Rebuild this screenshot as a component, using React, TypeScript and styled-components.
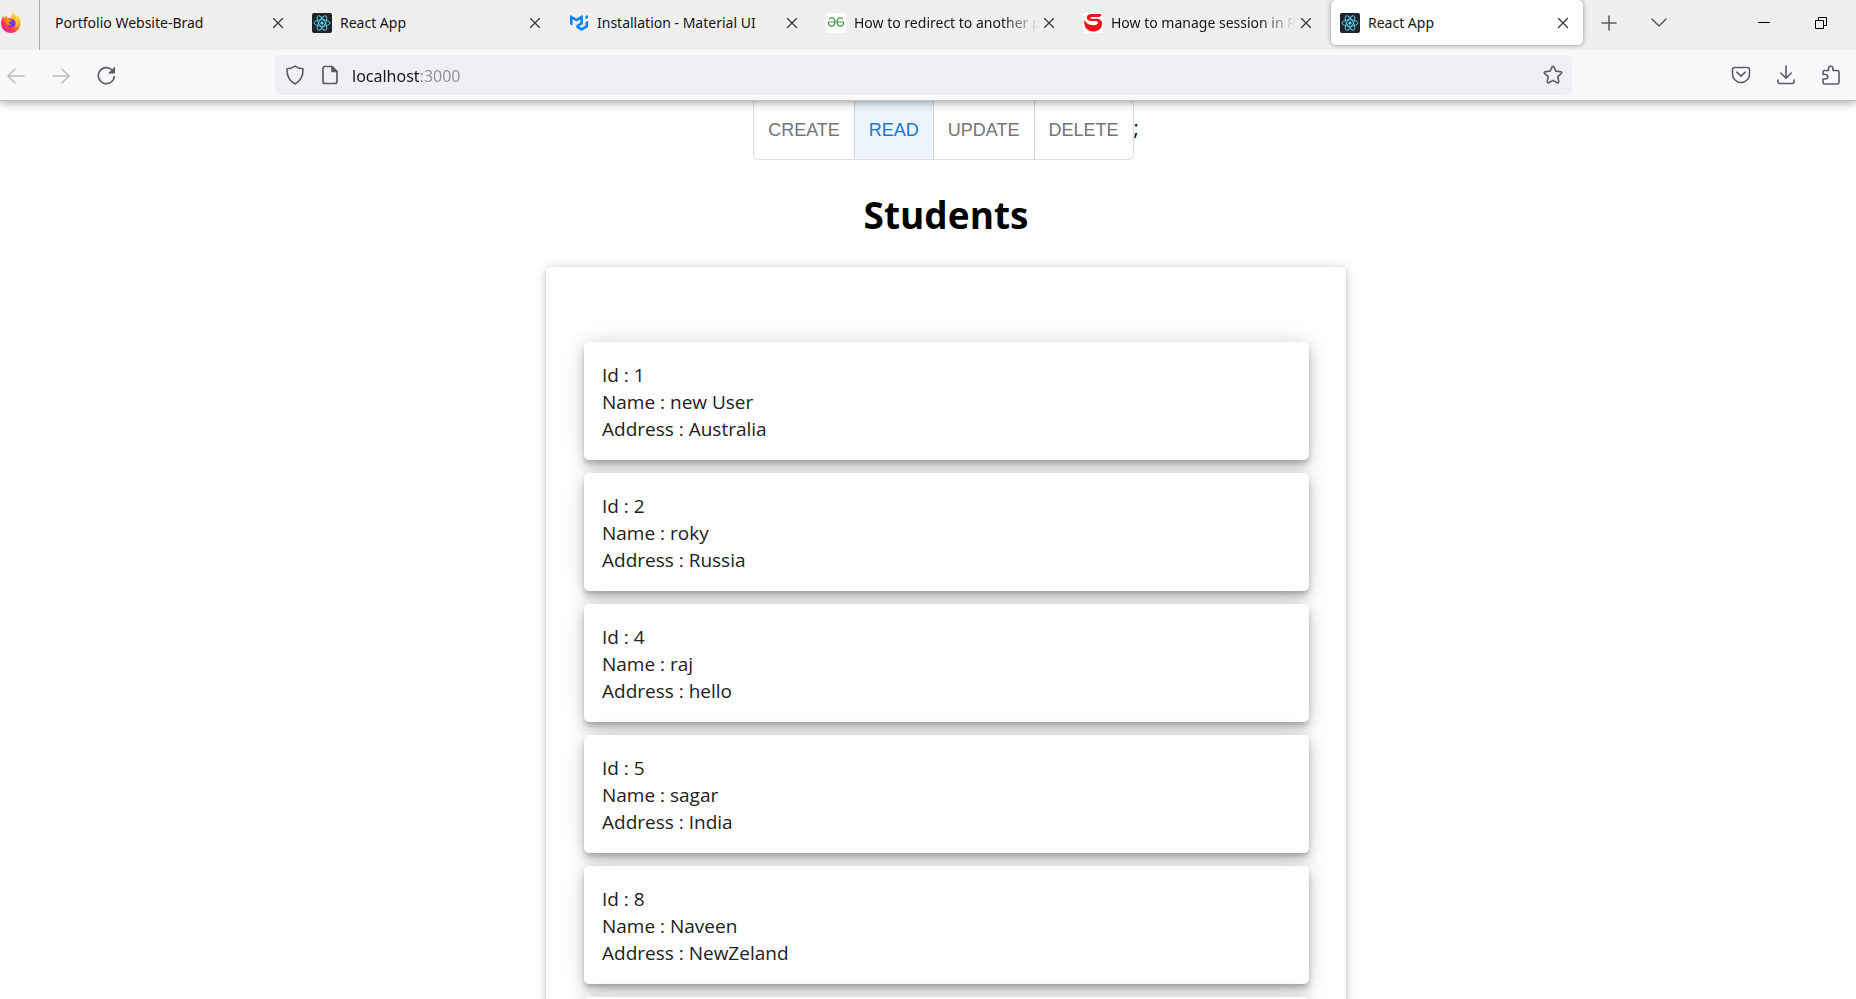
import React from "react";
import styled, { createGlobalStyle, css } from "styled-components";
import { SiMui } from "react-icons/si";

const uiFont = '"Open Sans", "Noto Sans", sans-serif';
const chromeFont = '"Noto Sans", "Open Sans", sans-serif';

const GlobalStyle = createGlobalStyle`
  *, *::before, *::after { box-sizing: border-box; }
  body { margin: 0; background: #fff; font-family: ${uiFont}; }
  button, input { font: inherit; color: inherit; }
`;

const Window = styled.div`
  display: flex;
  flex-direction: column;
  height: 100vh;
  overflow: hidden;
`;

const TabStrip = styled.div`
  position: relative;
  z-index: 2;
  display: flex;
  flex: none;
  height: 50px;
  background: #efefef;
  font-family: ${chromeFont};
`;

const PinnedTab = styled.button`
  display: flex;
  flex: none;
  align-items: center;
  width: 40px;
  padding: 0 0 6px 1px;
  border: 0;
  border-right: 1px solid #aaa;
  background: none;
`;

const Tabs = styled.div`
  display: flex;
  flex: 0 1 1543px;
  gap: 5px;
  min-width: 0;
  padding-left: 6px;
`;

const Tab = styled.div<{ $active?: boolean }>`
  display: flex;
  flex: 1 1 0;
  align-items: center;
  gap: 8px;
  min-width: 0;
  height: 45px;
  padding: 0 10px 0 9px;
  ${(p) =>
    p.$active &&
    css`
      border-radius: 5px;
      background: #fff;
      box-shadow: 0 0 5px rgba(0, 0, 0, 0.4);
    `}
`;

const TabTitle = styled.button<{ $faded?: boolean }>`
  flex: 1;
  min-width: 0;
  padding: 0;
  overflow: hidden;
  border: 0;
  background: none;
  color: #15141a;
  font-size: 14px;
  line-height: 20px;
  text-align: left;
  white-space: nowrap;
  ${(p) =>
    p.$faded &&
    css`
      mask-image: linear-gradient(to left, transparent, #000 36px);
    `}
`;

const Favicon = styled.span<{ $bg?: string }>`
  display: flex;
  flex: none;
  align-items: center;
  justify-content: center;
  width: 20px;
  height: 20px;
  border-radius: 2px;
  background: ${(p) => p.$bg ?? "none"};
`;

const IconButton = styled.button<{ $width?: number; $dim?: boolean }>`
  display: flex;
  flex: none;
  align-items: center;
  justify-content: center;
  width: ${(p) => p.$width ?? 45}px;
  height: 40px;
  padding: 0;
  border: 0;
  background: none;
  color: ${(p) => (p.$dim ? "#bcbcc0" : "#5b5b66")};
`;

const CloseButton = styled(IconButton)`
  width: 20px;
  margin-left: -8px;
  color: #333;
`;

const TabTools = styled.div`
  display: flex;
  flex: 1;
  align-items: center;
  padding: 0 7px 5px 1px;
`;

const WindowControls = styled.div`
  display: flex;
  margin-left: auto;
  button {
    color: #000;
  }
`;

const Toolbar = styled.div`
  position: relative;
  z-index: 1;
  display: flex;
  flex: none;
  align-items: center;
  height: 50px;
  padding-right: 3px;
  background: #f9f9fb;
  box-shadow: 0 1px 0 #c0c0c0, 0 1px 10px rgba(0, 0, 0, 0.5);
`;

const NavButtons = styled.div`
  display: flex;
  flex: none;
  width: 275px;
  margin-left: -7px;
`;

const AddressBar = styled.label`
  display: flex;
  flex: 1;
  align-items: center;
  height: 40px;
  margin: 0 146px 0 7px;
  padding: 0 9px;
  border-radius: 5px;
  background: #f0f0f4;
  color: #5b5b66;
`;

const AddressIcon = styled.span`
  display: flex;
  justify-content: center;
  width: 34px;
  &:first-child {
    width: 22px;
    margin-right: 7px;
  }
`;

const AddressInput = styled.input`
  flex: 1;
  min-width: 0;
  margin-left: 5px;
  padding: 2px 0 0;
  border: 0;
  outline: 0;
  background: linear-gradient(to right, #15141a 68px, #8f8f98 68px);
  background-clip: text;
  -webkit-text-fill-color: transparent;
  font-family: ${chromeFont};
  font-size: 16px;
  line-height: 24px;
`;

const Page = styled.main`
  flex: 1;
  min-height: 0;
  padding-left: 36px;
  overflow: hidden;
`;

const ActionBar = styled.div`
  display: flex;
  align-items: center;
  justify-content: center;
  height: 60px;
  font-size: 20px;
  line-height: 24px;
`;

const ActionSuffix = styled.span`
  padding-bottom: 4px;
`;

const ToggleGroup = styled.div`
  display: flex;
  height: 60px;
  overflow: hidden;
  border: 1px solid #dedede;
  border-radius: 5px;
`;

const Toggle = styled.button<{ $selected?: boolean }>`
  padding: 0 14px;
  border: 0;
  background: ${(p) => (p.$selected ? "#edf4fc" : "none")};
  color: ${(p) => (p.$selected ? "#1976d2" : "#757575")};
  font-family: "Liberation Sans", Arial, sans-serif;
  font-size: 18px;
  line-height: 30px;
  & + & {
    border-left: 1px solid #d3d5d8;
  }
`;

const Heading = styled.h1`
  margin: 28px 0 25px;
  font-size: 37px;
  line-height: 54px;
  text-align: center;
`;

const Panel = styled.section`
  display: flex;
  flex-direction: column;
  gap: 13px;
  max-width: 800px;
  margin: 0 auto;
  padding: 75px 37px 38px 38px;
  border-radius: 5px;
  box-shadow: 0 4px 1px -2px rgba(0, 0, 0, 0.2), 0 2px 3px rgba(0, 0, 0, 0.14),
    0 1px 12px rgba(0, 0, 0, 0.2);
`;

const StudentCard = styled.article`
  flex: none;
  min-height: 118px;
  padding: 20px 18px 17px;
  border-radius: 5px;
  background: #fff;
  box-shadow: 0 4px 5px -1px rgba(0, 0, 0, 0.2), 0 7px 12px rgba(0, 0, 0, 0.14),
    0 1px 22px rgba(0, 0, 0, 0.16);
  color: #212121;
  font-size: 19px;
  line-height: 27px;
`;

const Stroke = ({
  size = 20,
  width = 1.5,
  children,
}: {
  size?: number;
  width?: number;
  children: React.ReactNode;
}) => (
  <svg
    width={size}
    height={size}
    viewBox="0 0 20 20"
    fill="none"
    stroke="currentColor"
    strokeWidth={width}
    strokeLinecap="round"
    strokeLinejoin="round"
    aria-hidden="true"
  >
    {children}
  </svg>
);

const FirefoxLogo = () => (
  <svg width="20" height="21" viewBox="0 0 20 21" aria-hidden="true">
    <defs>
      <linearGradient id="ffBody" x1="0.85" y1="0.1" x2="0.2" y2="0.95">
        <stop offset="0" stopColor="#fff044" />
        <stop offset="0.4" stopColor="#ff9a2e" />
        <stop offset="0.72" stopColor="#ff3b4e" />
        <stop offset="1" stopColor="#e6168a" />
      </linearGradient>
    </defs>
    <path
      d="M12 0c.6 1.800 2.400 3 3.600 4.600.5-.1.600-.7.500-1.300C18.500 5 20 8 19.700 11.500 19.300 16.800 15 21 10 21 4.400 21 0 16.700 0 11.300 0 8.500.8 5.900 2.600 3.800L3.200 6 5.600 3.600 6.200 5.800 10.500 5.500C10.700 3.400 10.800 1.500 12 0Z"
      fill="url(#ffBody)"
    />
    <circle cx="10.200" cy="11.200" r="4.200" fill="#7a35e8" />
    <path d="M3 7.500c1.500-1 3.500-.8 5 .2L11 8.200c-.5 1.300-2 1.500-3 1.800-.6 1.400.5 3 2.500 2.700-1.700 1.500-4.800.9-5.500-1.700C4.600 9.500 4 8.500 3 7.500Z" fill="#ff8a1f" />
    <path d="M13 7c2.500 1.500 3.200 5.500 1 8 3-1 4.500-5 2.500-8.500Z" fill="#ffc93a" />
  </svg>
);

const ReactLogo = () => (
  <Favicon $bg="#20232a">
    <svg width="18" height="18" viewBox="-9 -9 18 18" fill="none" stroke="#5ac8e6" aria-hidden="true">
      <ellipse rx="8" ry="3.200" />
      <ellipse rx="8" ry="3.200" transform="rotate(60)" />
      <ellipse rx="8" ry="3.200" transform="rotate(120)" />
      <circle r="1.600" fill="#61dafb" stroke="none" />
    </svg>
  </Favicon>
);

const MuiLogo = () => (
  <Favicon>
    <SiMui size={18} color="#0a84ff" />
  </Favicon>
);

const GfgLogo = () => (
  <Favicon $bg="#fff">
    <svg width="20" height="20" viewBox="0 0 20 20" fill="none" stroke="#3f9142" strokeWidth="1.200" aria-hidden="true">
      <path d="M3 6.200C3.800 5 5 4.700 6.200 4.800 8 5 9 6.600 9 9c0 2.600-1.300 4.200-3.500 4.200S2.300 11.800 2.300 9H9" />
      <path d="M17 6.200c-.8-1.200-2-1.500-3.200-1.400C12 5 11 6.600 11 9c0 2.600 1.300 4.200 3.500 4.200S17.700 11.800 17.700 9H11" />
    </svg>
  </Favicon>
);

const SessionLogo = () => (
  <Favicon $bg="#fff">
    <svg width="20" height="20" viewBox="0 0 20 20" aria-hidden="true">
      <path
        d="M18.500 1H9.500C5.500 1 3.800 2.300 3.800 4.600c0 2.400 1.700 3.400 4.700 3.400h4c1.600 0 2.300.6 2.300 1.800 0 1.500-1.600 2.400-4.300 2.400C6 12.200 3 10.500 1.300 6.500.3 13.500 4 18.500 10 18.500c5.300 0 9-3 9-7.800C19 7.200 17 5.800 13.500 5.800H9.200c-1.200 0-1.700-.3-1.700-.9 0-.7.8-1 2-1h6.300c1.700 0 2.600-1.200 2.700-2.900Z"
        fill="#ea141b"
      />
    </svg>
  </Favicon>
);

const tabs = [
  { title: "Portfolio Website-Brad" },
  { title: "React App", logo: <ReactLogo /> },
  { title: "Installation - Material UI", logo: <MuiLogo /> },
  { title: "How to redirect to another p", logo: <GfgLogo />, faded: true },
  { title: "How to manage session in R", logo: <SessionLogo />, faded: true },
  { title: "React App", logo: <ReactLogo />, active: true },
];

const actions = ["CREATE", "READ", "UPDATE", "DELETE"];

const students = [
  { id: 1, name: "new User", address: "Australia" },
  { id: 2, name: "roky", address: "Russia" },
  { id: 4, name: "raj", address: "hello" },
  { id: 5, name: "sagar", address: "India" },
  { id: 8, name: "Naveen", address: "NewZeland" },
];

export default function App() {
  return (
    <Window>
      <GlobalStyle />
      <TabStrip>
        <PinnedTab aria-label="Firefox">
          <FirefoxLogo />
        </PinnedTab>
        <Tabs>
          {tabs.map((tab, i) => (
            <Tab key={i} $active={tab.active}>
              {tab.logo}
              <TabTitle $faded={tab.faded}>{tab.title}</TabTitle>
              <CloseButton aria-label="Close tab">
                <Stroke size={20} width={1.2}>
                  <path d="M5.500 5.500l9 9M14.500 5.500l-9 9" />
                </Stroke>
              </CloseButton>
            </Tab>
          ))}
        </Tabs>
        <TabTools>
          <IconButton $width={50} aria-label="New tab">
            <Stroke><path d="M10 3v14M3 10h14" /></Stroke>
          </IconButton>
          <IconButton $width={50} aria-label="List all tabs">
            <Stroke><path d="M3 6l7 7 7-7" /></Stroke>
          </IconButton>
          <WindowControls>
            <IconButton $width={57} aria-label="Minimize">
              <svg width="12" height="12" viewBox="0 0 12 12" aria-hidden="true">
                <path d="M0 5.500h12" stroke="currentColor" />
              </svg>
            </IconButton>
            <IconButton $width={57} aria-label="Restore">
              <svg width="12" height="12" viewBox="0 0 12 12" fill="none" stroke="currentColor" aria-hidden="true">
                <path d="M.5 3.500h8v8h-8zM3.500 3.500v-3h8v8h-3" />
              </svg>
            </IconButton>
          </WindowControls>
        </TabTools>
      </TabStrip>

      <Toolbar>
        <NavButtons>
          <IconButton $dim aria-label="Back">
            <Stroke><path d="M18 11H2M9 4l-7 7 7 7" /></Stroke>
          </IconButton>
          <IconButton $dim aria-label="Forward">
            <Stroke><path d="M2 11h16M11 4l7 7-7 7" /></Stroke>
          </IconButton>
          <IconButton aria-label="Reload">
            <Stroke width={1.7}>
              <path d="M18.300 11.500A8 8 0 1 1 16 5" />
              <path d="M18.500 2.800v5.300h-5.300z" fill="currentColor" strokeWidth="1" />
            </Stroke>
          </IconButton>
        </NavButtons>
        <AddressBar>
          <AddressIcon>
            <Stroke width={1.600}>
              <path d="M10 1C8.200 2.600 4.800 3.600 2 3.800c-.3 5.800 1.500 11.600 8 15.200 6.500-3.600 8.300-9.400 8-15.200C15.200 3.600 11.800 2.600 10 1z" />
            </Stroke>
          </AddressIcon>
          <AddressIcon>
            <Stroke width={1.700}>
              <path d="M12 1.500H5A2 2 0 0 0 3 3.500v13a2 2 0 0 0 2 2h10a2 2 0 0 0 2-2V6.500z" />
              <path d="M12 1.500v5h5z" fill="currentColor" />
            </Stroke>
          </AddressIcon>
          <AddressInput aria-label="Address" defaultValue="localhost:3000" />
          <IconButton $width={20} aria-label="Bookmark this page">
            <Stroke width={1.600}>
              <path d="M10 1.200c.4 0 .7.200.9.600l2 4.300 4.900.6c.9.100 1.200 1.100.6 1.700l-3.600 3.300.9 4.900c.2.900-.7 1.500-1.500 1.100L10 15.400l-4.200 2.300c-.8.400-1.700-.2-1.500-1.100l.9-4.900L1.600 8.400C1 7.800 1.300 6.800 2.200 6.700l4.900-.6 2-4.300c.2-.4.500-.6.900-.6z" />
            </Stroke>
          </IconButton>
        </AddressBar>
        <IconButton aria-label="Save to Pocket">
          <Stroke width={1.600}>
            <path d="M3.500 2.500h13a2 2 0 0 1 2 2V9a8.500 8.500 0 0 1-17 0V4.500a2 2 0 0 1 2-2z" />
            <path d="M5.800 7.200L10 11.200l4.200-4" />
          </Stroke>
        </IconButton>
        <IconButton aria-label="Downloads">
          <Stroke width={1.600}>
            <path d="M10 1v12M4.800 8L10 13.200 15.200 8M2 15v1.500A2 2 0 0 0 4 18.500h12a2 2 0 0 0 2-2V15" />
          </Stroke>
        </IconButton>
        <IconButton aria-label="Extensions">
          <Stroke width={1.600}>
            <path d="M3.500 5.500h4V3.500a2.200 2.200 0 0 1 4.500 0v2h4.500a1.500 1.500 0 0 1 1.500 1.500v10.500a1.500 1.500 0 0 1-1.500 1.500H3.500A1.500 1.500 0 0 1 2 17.500V14h2.500a2.200 2.200 0 0 0 0-4.500H2V7a1.500 1.500 0 0 1 1.500-1.500z" />
          </Stroke>
        </IconButton>
      </Toolbar>

      <Page>
        <ActionBar>
          <ToggleGroup role="group" aria-label="Action">
            {actions.map((action) => (
              <Toggle key={action} $selected={action === "READ"} aria-pressed={action === "READ"}>
                {action}
              </Toggle>
            ))}
          </ToggleGroup>
          <ActionSuffix>;</ActionSuffix>
        </ActionBar>
        <Heading>Students</Heading>
        <Panel>
          {students.map((student) => (
            <StudentCard key={student.id}>
              <div>Id : {student.id}</div>
              <div>Name : {student.name}</div>
              <div>Address : {student.address}</div>
            </StudentCard>
          ))}
          <StudentCard />
        </Panel>
      </Page>
    </Window>
  );
}
